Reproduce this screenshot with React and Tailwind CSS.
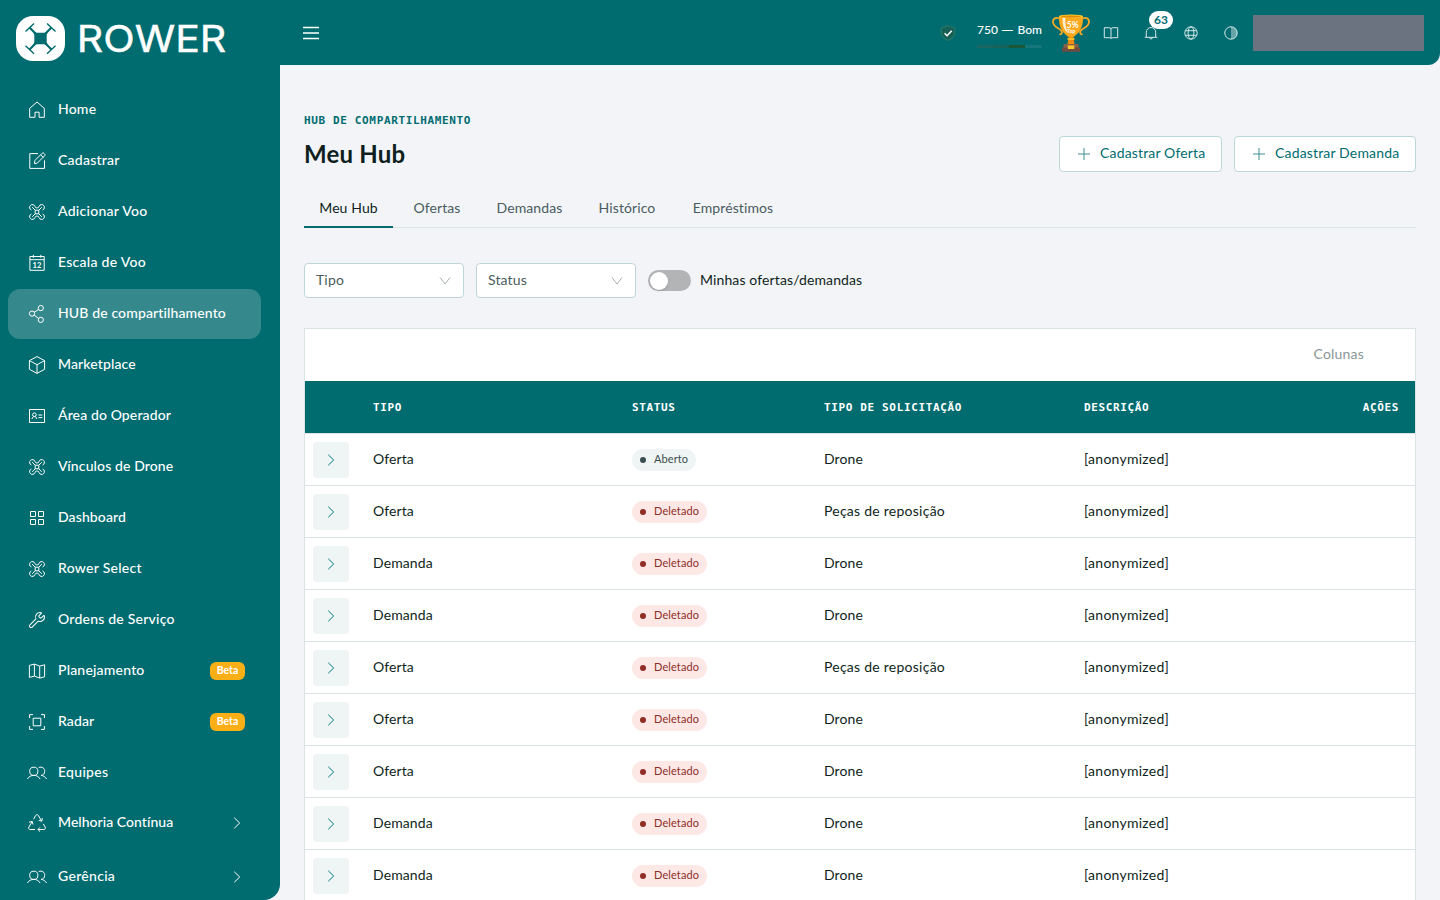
import React, { useState } from 'react';
import clsx from 'clsx';
import { Wrench } from 'lucide-react';

const Icon = ({ children, className = 'w-5 h-5', box = '0 0 20 20', width = 1 }) => (
  <svg viewBox={box} className={clsx('shrink-0', className)} fill="none" stroke="currentColor" strokeWidth={width}>
    {children}
  </svg>
);

const HomeIcon = () => (
  <Icon><path d="M2.7 17.3V8.3L10 2l7.3 6.3v9h-5.2v-5.1H8v5.1z" /></Icon>
);

const EditIcon = () => (
  <Icon>
    <path d="M11 2.6H2.8v14.8h14.7V9.4" />
    <path d="M7.4 12.7l.5-3.2 7.2-7.2c.6-.6 1.3-.5 1.8 0l.7.7c.5.5.5 1.2 0 1.8l-7.2 7.2zM13.7 3.8l2.5 2.5" />
  </Icon>
);

const DroneIcon = () => (
  <Icon>
    <path d="M8.2 8.2h3.6v3.6H8.2zM5.2 5.2l3 3M14.8 5.2l-3 3M5.2 14.8l3-3M14.8 14.8l-3-3" />
    <path d="M4.4 8A2.8 2.8 0 1 1 8 4.4c0 1 .8 1.5 2 1.5s2-.5 2-1.5A2.8 2.8 0 1 1 15.6 8M4.4 12A2.8 2.8 0 1 0 8 15.6c0-1 .8-1.5 2-1.5s2 .5 2 1.5A2.8 2.8 0 1 0 15.6 12" />
  </Icon>
);

const CalendarIcon = () => (
  <Icon>
    <path d="M2.9 3.5h14.3v13.8H2.9zM2.9 6.7h14.3M6.4 1.8v3M13.8 1.8v3" />
    <text x="10" y="14.8" fontSize="7.6" fontFamily="Lato, sans-serif" fontWeight="700" textAnchor="middle" fill="currentColor" stroke="none">12</text>
  </Icon>
);

const ShareIcon = () => (
  <Icon>
    <circle cx="13.8" cy="4.1" r="2.6" />
    <circle cx="5" cy="9.6" r="2.6" />
    <circle cx="13.8" cy="15.9" r="2.6" />
    <path d="M7.2 8.2l4.4-2.7M7.1 11.1l4.6 3.3" />
  </Icon>
);

const CubeIcon = () => (
  <Icon><path d="M10 1.6l7.6 4v8.7L10 18.4l-7.6-4.1V5.6zM2.4 5.6L10 9.7l7.6-4.1M10 9.7v8.7" /></Icon>
);

const IdCardIcon = () => (
  <Icon>
    <path d="M2.5 3.5h15v13h-15z" />
    <circle cx="7.4" cy="8.7" r="1.8" />
    <path d="M5 13c.2-3.2 4.6-3.2 4.8 0M11.4 9h3.9M11.4 11.6h3.9" />
  </Icon>
);

const GridIcon = () => (
  <Icon><path d="M3.5 3.5h5v5h-5zM11.5 3.5h5v5h-5zM3.5 11.5h5v5h-5zM11.5 11.5h5v5h-5z" /></Icon>
);

const WrenchIcon = () => (
  <span className="w-5 flex justify-center"><Wrench className="w-[18px] h-[18px] -mt-px" strokeWidth={1.35} /></span>
);

const MapIcon = () => (
  <Icon><path d="M2.4 4.4l5-1.3 5.3 2 4.9-1.3v12l-4.9 1.3-5.3-2-5 1.3zM7.4 3.1v12M12.7 5.1v12" /></Icon>
);

const RadarIcon = () => (
  <Icon><path d="M6.2 6.2h7.6v7.6H6.2zM2.6 6V2.6H6M14 2.6h3.4V6M17.4 14v3.4H14M6 17.4H2.6V14" /></Icon>
);

const UsersIcon = () => (
  <Icon>
    <circle cx="6.8" cy="8.3" r="4.1" />
    <path d="M.4 16c1.4-2.4 3.6-3.6 6.4-3.6s5 1.2 6.3 3.6M11.7 4.6c3.4-1.5 6.1.8 6 3.7 0 2.2-1.4 3.9-3.6 4.1 2.4.2 4.2 1.5 5.5 3.6" />
  </Icon>
);

const RecycleIcon = () => (
  <Icon>
    <path d="M6.6 6.2L8.7 2.4c.6-1 2-1 2.6 0l3.3 5.7M15.3 5l-.5 3.2-3-.8" />
    <path d="M16.3 10.9l1.9 3.3c.6 1.1-.1 2.3-1.3 2.3h-5.7M13 14.4l-2.1 2.1 2.1 2.1" />
    <path d="M8 16.5H3.1c-1.2 0-1.9-1.3-1.3-2.3l3.3-5.6M2 9.2l3.2-.8.8 3.1" />
  </Icon>
);

const ChevronRight = ({ className }) => (
  <Icon box="0 0 8 12" className={className}><path d="M1.3.8L6.7 6l-5.4 5.2" /></Icon>
);

const ChevronDown = () => (
  <Icon box="0 0 12 8" className="w-3 h-2 text-[#a9afaf]"><path d="M1 .5L6 7l5-6.5" /></Icon>
);

const PlusIcon = () => (
  <Icon box="0 0 14 14" className="w-3.5 h-3.5 text-[#3f8f92]"><path d="M7 1v12M1 7h12" /></Icon>
);

const Logo = () => (
  <div className="flex items-start pl-4 pt-4 h-[85px]">
    <svg viewBox="0 0 49 45" className="w-[49px] h-[45px]">
      <rect width="49" height="45" rx="17" fill="#fff" />
      <g fill="none" stroke="#006c70">
        <path d="M13.5 11.5l7 7M35.5 11.5l-7 7M13.5 33.5l7-7M35.5 33.5l-7-7" strokeWidth="2.2" />
        <path d="M9.5 15.6L18 7.5M39.5 15.6L31 7.5M9.5 29.7l8.5 8M39.5 29.7l-8.5 8" strokeWidth="1.4" />
      </g>
      <path d="M17 15.5l3.5 1.2h8l3.5-1.2-1.3 3.4v7.4l1.3 3.2-3.5-1.2h-8L17 29.5l1.3-3.2v-7.4z" fill="#006c70" />
    </svg>
    <svg viewBox="0 0 156 44" className="w-[156px] h-11 ml-2.5 -mt-px" fill="#fff">
      <text x="1.8" y="36.5" fontFamily="Inter, sans-serif" fontSize="37" fontWeight="400" textLength="149.5" lengthAdjust="spacingAndGlyphs" stroke="#fff" strokeWidth=".4">ROWER</text>
    </svg>
  </div>
);

const NAV = [
  { label: 'Home', icon: HomeIcon, tracking: 'tracking-[0.2px]' },
  { label: 'Cadastrar', icon: EditIcon, tracking: 'tracking-[0.25px]' },
  { label: 'Adicionar Voo', icon: DroneIcon, tracking: 'tracking-[0.28px]' },
  { label: 'Escala de Voo', icon: CalendarIcon, tracking: 'tracking-[0.28px]' },
  { label: 'HUB de compartilhamento', icon: ShareIcon, tracking: 'tracking-[0.13px]', active: true },
  { label: 'Marketplace', icon: CubeIcon, tracking: 'tracking-[0.12px]' },
  { label: 'Área do Operador', icon: IdCardIcon, tracking: 'tracking-[0.12px]' },
  { label: 'Vínculos de Drone', icon: DroneIcon, tracking: 'tracking-[0.12px]' },
  { label: 'Dashboard', icon: GridIcon, tracking: 'tracking-[0.12px]' },
  { label: 'Rower Select', icon: DroneIcon, tracking: 'tracking-[0.28px]' },
  { label: 'Ordens de Serviço', icon: WrenchIcon, tracking: 'tracking-[0.22px]' },
  { label: 'Planejamento', icon: MapIcon, tracking: 'tracking-[0.2px]', beta: true },
  { label: 'Radar', icon: RadarIcon, tracking: 'tracking-[0.1px]', beta: true },
  { label: 'Equipes', icon: UsersIcon, tracking: 'tracking-[0.3px]' },
];

const GROUPS = [
  { label: 'Melhoria Contínua', icon: RecycleIcon, tracking: 'tracking-[0.04px]' },
  { label: 'Gerência', icon: UsersIcon, tracking: 'tracking-[0.3px]' },
];

const NavItem = ({ item, expandable }) => {
  const ItemIcon = item.icon;
  return (
    <a className={clsx('h-[50px] shrink-0 w-[253px] pl-[19px] pr-4 rounded-xl flex items-center text-white', item.active && 'bg-[#35898c]')}>
      <ItemIcon />
      <span className={clsx('ml-[11px] -mt-0.5 text-sm font-medium whitespace-nowrap', item.tracking)}>{item.label}</span>
      {item.beta && (
        <span className="ml-auto w-[35px] h-[18px] rounded-md bg-[#fbaf17] text-[10.5px] leading-[17px] font-bold text-center">Beta</span>
      )}
      {expandable && <ChevronRight className="ml-auto mr-1 w-2 h-3" />}
    </a>
  );
};

const Sidebar = () => (
  <aside className="w-[280px] h-[900px] shrink-0 bg-[#006c70] rounded-br-2xl overflow-hidden">
    <Logo />
    <nav className="pl-2">
      <div className="flex flex-col gap-px">
        {NAV.map((item) => <NavItem key={item.label} item={item} />)}
      </div>
      <div className="flex flex-col gap-1">
        {GROUPS.map((item) => <NavItem key={item.label} item={item} expandable />)}
      </div>
    </nav>
  </aside>
);

const Shield = () => (
  <svg viewBox="0 0 18 18" className="w-[18px] h-[18px]">
    <path d="M9 .8l7.5 2.8v5c0 4-2.9 7-7.5 8.7C4.4 15.6 1.5 12.6 1.5 8.6v-5z" fill="#1c7367" />
    <path d="M9 2.6l5.8 2.1v4c0 3-2.2 5.4-5.8 6.9-3.6-1.5-5.8-3.9-5.8-6.9v-4z" fill="#175f55" />
    <path d="M5.6 9.2l2.5 2.5 4.6-4.9" fill="none" stroke="#fff" strokeWidth="1.5" />
  </svg>
);

const Trophy = () => (
  <svg viewBox="0 0 38 38" className="w-[38px] h-[38px]">
    <g fill="none" stroke="#f9a825" strokeWidth="1.8">
      <path d="M8.5 5.2C5 2.6.9 4 1 8c.1 4.8 5.5 5.6 8.2 8.6 1.6 1.9.3 4.4-1.7 3.4" />
      <path d="M29.5 5.2C33 2.6 37.1 4 37 8c-.1 4.8-5.5 5.6-8.2 8.6-1.6 1.9-.3 4.4 1.7 3.4" />
    </g>
    <path d="M16.5 21h5v4l1.3 6h-7.6l1.3-6z" fill="#f28c0f" />
    <path d="M7 2.3h24c.3 5-.6 10.2-3 14.2-1.7 2.9-4.4 4.6-6 6.3h-6c-1.6-1.7-4.3-3.4-6-6.3-2.4-4-3.3-9.2-3-14.2z" fill="#fba81c" />
    <path d="M10.5 4h2.8c0 6 .5 11 2.9 15-4.2-2.6-5.7-8-5.7-15z" fill="#fff3d6" />
    <ellipse cx="19" cy="2.4" rx="12" ry="1.9" fill="#ffca28" />
    <ellipse cx="19" cy="2.5" rx="10" ry="1" fill="#e68a0c" />
    <path d="M15.5 24.2h7v1.6h-7z" fill="#ffca28" />
    <path d="M11.5 30h15v4h-15z" fill="#8d5f4b" />
    <path d="M10 33.5h18v4.3H10z" fill="#6d4c41" />
    <path d="M15.8 31.4h6.5V35h-6.5z" fill="#ffca28" />
    <text x="20.8" y="13.5" fontSize="8.5" fontWeight="700" fontFamily="Lato, sans-serif" textAnchor="middle" fill="#fff">5%</text>
    <text x="19.4" y="18.7" fontSize="5" fontWeight="700" fontFamily="Lato, sans-serif" textAnchor="middle" fill="#fff">Top</text>
  </svg>
);

const Header = () => (
  <header className="h-[65px] bg-[#006c70] rounded-br-xl flex items-center pl-[22px] pr-4 text-white">
    <Icon box="0 0 18 14" className="w-[18px] h-3.5" width={1.3}>
      <path d="M1 1.5h16M1 7h16M1 12.5h16" />
    </Icon>
    <div className="ml-auto flex items-center">
      <Shield />
      <div className="ml-5 pt-1 w-[65px] flex flex-col">
        <span className="text-xs leading-4 font-medium whitespace-nowrap">750 <span className="inline-block origin-left scale-x-[1.35] mr-1">—</span> Bom</span>
        <span className="mt-[7px] flex h-[3px] rounded-full overflow-hidden">
          <i className="w-4 bg-[#1b6663]" />
          <i className="w-4 bg-[#17635a]" />
          <i className="w-4 bg-[#1b5737]" />
          <i className="w-[17px] bg-[#15777a]" />
        </span>
      </div>
      <div className="ml-2.5"><Trophy /></div>
      <div className="flex items-center ml-[13px] text-[#d5e8e8]">
        <Icon box="0 0 16 16" className="w-4 h-4">
          <path d="M8 3.6c-.6-.6-1.3-.9-2.2-.9H1.3v10h4.9c.8 0 1.4.3 1.8.9.4-.6 1-.9 1.8-.9h4.9v-10h-4.5c-.9 0-1.6.3-2.2.9zM8 3.6v10" />
        </Icon>
        <div className="relative ml-6">
          <Icon box="0 0 16 16" className="w-4 h-4">
            <path d="M1.8 12.3h12.4M3.3 12.3V7.2a4.7 4.7 0 0 1 9.4 0v5.1M6.3 12.5c.2 1.9 3.2 1.9 3.4 0" />
          </Icon>
          <span className="absolute left-1.5 -top-3.5 w-6 h-[18px] rounded-full bg-white text-[#006c70] text-xs leading-[17px] font-bold text-center">63</span>
        </div>
        <Icon box="0 0 16 16" className="ml-6 w-4 h-4">
          <circle cx="8" cy="8" r="6.2" />
          <ellipse cx="8" cy="8" rx="2.9" ry="6.2" />
          <path d="M2.3 5.7h11.4M2.3 10.3h11.4" />
        </Icon>
        <Icon box="0 0 16 16" className="ml-6 w-4 h-4">
          <circle cx="8" cy="8" r="6.2" />
          <path d="M8 1.8a6.2 6.2 0 0 1 0 12.4z" fill="#fff" fillOpacity=".4" stroke="none" />
        </Icon>
      </div>
      <div className="ml-3.5 w-[171px] h-9 bg-[#6b7280]" />
    </div>
  </header>
);

const TABS = [
  { label: 'Meu Hub', width: 'w-[89px]' },
  { label: 'Ofertas', width: 'w-[80px]' },
  { label: 'Demandas', width: 'w-[97px]' },
  { label: 'Histórico', width: 'w-[90px]' },
  { label: 'Empréstimos', width: 'w-[114px]' },
];

const ROWS = [
  ['Oferta', 'Aberto', 'Drone'],
  ['Oferta', 'Deletado', 'Peças de reposição'],
  ['Demanda', 'Deletado', 'Drone'],
  ['Demanda', 'Deletado', 'Drone'],
  ['Oferta', 'Deletado', 'Peças de reposição'],
  ['Oferta', 'Deletado', 'Drone'],
  ['Oferta', 'Deletado', 'Drone'],
  ['Demanda', 'Deletado', 'Drone'],
  ['Demanda', 'Deletado', 'Drone'],
];

const COLS = 'grid grid-cols-[68px_259px_192px_260px_1fr] items-center';
const MONO = "font-['DejaVu_Sans_Mono',monospace] text-[11px] font-bold tracking-[0.64px]";

const StatusBadge = ({ status }) => {
  const open = status === 'Aberto';
  return (
    <span className={clsx('inline-flex items-center h-[22px] rounded-full px-2 gap-2 text-[11px]', open ? 'w-16 bg-[#eff4f4] text-[#3b4f50]' : 'w-[75px] bg-[#fde8e6] text-[#8f2d26]')}>
      <i className="w-1.5 h-1.5 rounded-full bg-current shrink-0" />
      <span className="-mt-0.5 tracking-[0.1px]">{status}</span>
    </span>
  );
};

const Select = ({ label }) => (
  <button className="w-40 h-[35px] bg-white border border-[#bfd6d6] rounded pl-[11px] pr-3 flex items-center justify-between text-sm text-[#4a5c5d] tracking-[0.15px]">
    <span className="-mt-0.5">{label}</span>
    <ChevronDown />
  </button>
);

const ActionButton = ({ label, className }) => (
  <button className={clsx('h-9 bg-white border border-[#bfd6d6] rounded flex items-center pl-[17px] gap-[9px] text-sm text-[#006c70] whitespace-nowrap', className)}>
    <PlusIcon />
    <span className="-mt-0.5">{label}</span>
  </button>
);

const App = () => {
  const [tab, setTab] = useState('Meu Hub');
  const [mine, setMine] = useState(false);

  return (
    <div className="w-[1440px] h-[900px] overflow-hidden flex bg-[#f2f4f8] font-['Lato',sans-serif] text-[#0f1f20]">
      <Sidebar />
      <div className="flex-1 min-w-0">
        <Header />
        <main className="px-6 pt-12">
          <p className={clsx(MONO, 'leading-4 text-[#006c70]')}>HUB DE COMPARTILHAMENTO</p>
          <div className="flex items-center mt-[7px] h-9 gap-3">
            <h1 className="mr-auto text-2xl font-bold tracking-[0.2px]">Meu Hub</h1>
            <ActionButton label="Cadastrar Oferta" className="w-[163px] tracking-[0.16px]" />
            <ActionButton label="Cadastrar Demanda" className="w-[182px] tracking-[0.16px]" />
          </div>

          <div className="mt-[19px] h-[37px] flex gap-1 border-b border-[#dbe3e4]">
            {TABS.map((t) => (
              <button
                key={t.label}
                onClick={() => setTab(t.label)}
                className={clsx('h-[37px] pb-px text-sm tracking-[0.1px] whitespace-nowrap border-b-2', t.width, tab === t.label ? 'border-[#006c70]' : 'border-transparent text-[#4a5c5d]')}
              >
                {t.label}
              </button>
            ))}
          </div>

          <div className="mt-[35px] h-[35px] flex items-center gap-3">
            <Select label="Tipo" />
            <Select label="Status" />
            <label className="flex items-center text-sm tracking-[0.12px]">
              <button onClick={() => setMine(!mine)} className={clsx('w-[43px] h-[21px] p-0.5 rounded-full flex items-center', mine ? 'bg-[#006c70] justify-end' : 'bg-[#b3b4b5]')}>
                <span className="w-[18px] h-[18px] rounded-full bg-white shadow" />
              </button>
              <span className="ml-[9px] -mt-0.5">Minhas ofertas/demandas</span>
            </label>
          </div>

          <section className="mt-[30px] bg-white border border-[#dbe3e4] text-sm">
            <div className="h-[52px] flex items-center justify-end pr-[51px] pb-0.5 text-[#8b9697]">
              <span className="tracking-[0.2px]">Colunas</span>
            </div>
            <div className={clsx(COLS, MONO, 'h-[52px] pt-0.5 bg-[#006c70] text-white')}>
              <span />
              <span>TIPO</span>
              <span>STATUS</span>
              <span>TIPO DE SOLICITAÇÃO</span>
              <span className="flex justify-between pr-4"><span>DESCRIÇÃO</span><span>AÇÕES</span></span>
            </div>
            {ROWS.map(([type, status, request], i) => (
              <div key={i} className={clsx(COLS, 'h-[52px] pt-px border-t border-[#dbe3e4] tracking-[0.1px]')}>
                <button className="ml-2 w-9 h-9 rounded bg-[#eff4f4] text-[#00787c] flex items-center justify-center">
                  <ChevronRight className="w-2 h-3" />
                </button>
                <span className="pb-0.5">{type}</span>
                <StatusBadge status={status} />
                <span className={clsx('pb-0.5', request.length > 5 && 'tracking-[0.25px]')}>{request}</span>
                <span className="pb-0.5 tracking-[0.25px]">[anonymized]</span>
              </div>
            ))}
          </section>
        </main>
      </div>
    </div>
  );
};

export default App;
